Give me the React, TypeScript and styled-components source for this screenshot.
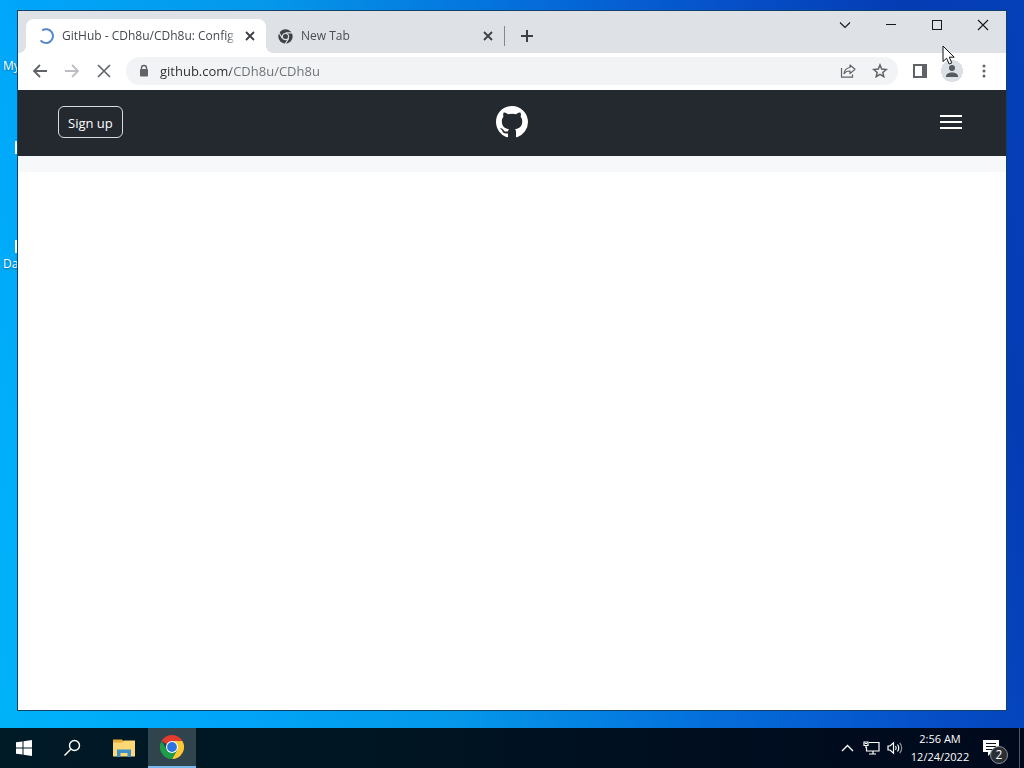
import React from "react";
import styled, { createGlobalStyle } from "styled-components";

const GlobalStyle = createGlobalStyle`
  *, *::before, *::after { box-sizing: border-box; }
  body {
    margin: 0;
    font-family: "Open Sans", "Noto Sans", sans-serif;
    font-size: 12px;
    line-height: 16px;
  }
  button, input { font: inherit; color: inherit; }
  svg { display: block; flex: none; }
`;

const Desktop = styled.div`
  position: relative;
  min-height: 100vh;
  display: flex;
  flex-direction: column;
  overflow: hidden;
  background: linear-gradient(75deg, #00b4f8 0%, #00a6fa 18%, #0498ea 38%, #0470dc 58%, #0650c8 76%, #043cb4 90%, #0540b8 100%);
`;

const DesktopLabel = styled.span<{ $top: number }>`
  position: absolute;
  left: 3px;
  top: ${(p) => p.$top}px;
  color: #fff;
  font-size: 12px;
  white-space: nowrap;
  text-shadow: 0 1px 2px rgba(0, 0, 0, 0.4);
`;

const DesktopIconEdge = styled.span<{ $top: number }>`
  position: absolute;
  left: 15px;
  top: ${(p) => p.$top}px;
  width: 12px;
  height: 13px;
  background: #f4f8fa;
`;

const Workspace = styled.div`
  flex: 1;
  display: flex;
  padding: 10px 17px 17px;
`;

const BrowserWindow = styled.main`
  position: relative;
  flex: 1;
  min-width: 0;
  display: flex;
  flex-direction: column;
  border: 1px solid #0f4266;
  background: #fff;
`;

const TabStrip = styled.div`
  display: flex;
  height: 42px;
  padding-left: 8px;
  background: #dee1e6;
`;

const Tabs = styled.div`
  display: flex;
  align-items: flex-end;
  flex: 1;
  min-width: 0;
`;

const Tab = styled.div<{ $active?: boolean }>`
  position: relative;
  display: flex;
  align-items: center;
  width: ${(p) => (p.$active ? 240 : 238)}px;
  height: 34px;
  padding: 0 8px 0 12px;
  border-radius: 8px 8px 0 0;
  color: ${(p) => (p.$active ? "#45494d" : "#4a4e52")};
  background: ${(p) => (p.$active ? "#fff" : "transparent")};

  &::before,
  &::after {
    content: "";
    display: ${(p) => (p.$active ? "block" : "none")};
    position: absolute;
    bottom: 0;
    width: 8px;
    height: 8px;
  }
  &::before {
    right: 100%;
    background: radial-gradient(circle at 0 0, transparent 8px, #fff 8px);
  }
  &::after {
    left: 100%;
    background: radial-gradient(circle at 100% 0, transparent 8px, #fff 8px);
  }
`;

const TabTitle = styled.span`
  flex: 1;
  min-width: 0;
  margin: 0 6px 0 8px;
  overflow: hidden;
  white-space: nowrap;
  mask-image: linear-gradient(to left, transparent, #000 8px);
`;

const IconButton = styled.button<{ $size?: number }>`
  display: flex;
  align-items: center;
  justify-content: center;
  flex: none;
  width: ${(p) => p.$size ?? 28}px;
  height: ${(p) => p.$size ?? 28}px;
  padding: 0;
  border: 0;
  border-radius: 50%;
  background: transparent;
  color: #5f6368;
`;

const TabClose = styled(IconButton)`
  color: #3c4043;
`;

const TabSeparator = styled.span`
  width: 1px;
  height: 20px;
  margin: 0 8px 7px 0;
  background: #85888d;
`;

const NewTabButton = styled(IconButton)`
  margin-bottom: 3px;
  color: #3c4043;
`;

const WindowControls = styled.div`
  display: flex;
  flex: none;
`;

const WindowButton = styled.button`
  display: flex;
  align-items: center;
  justify-content: center;
  width: 46px;
  height: 28px;
  padding: 0;
  border: 0;
  background: transparent;
  color: #16181a;
`;

const Toolbar = styled.div`
  display: flex;
  align-items: center;
  gap: 4px;
  height: 37px;
  padding: 0 8px 1px;
  background: #fff;
`;

const Omnibox = styled.form`
  display: flex;
  align-items: center;
  gap: 4px;
  flex: 1;
  min-width: 0;
  height: 28px;
  margin: 0 4px;
  padding: 0 4px 0 12px;
  border-radius: 14px;
  background: #f1f3f4;
`;

const Address = styled.input`
  flex: 1;
  min-width: 0;
  margin-left: 6px;
  padding: 0;
  border: 0;
  outline: 0;
  font-size: 13px;
  line-height: 20px;
  color: transparent;
  background: linear-gradient(to right, #2b2e31 71px, #6b6f74 71px);
  background-clip: text;
  -webkit-background-clip: text;
`;

const Avatar = styled(IconButton)`
  background: radial-gradient(circle, #dcdfe6 11px, transparent 11px);
`;

const SiteHeader = styled.header`
  display: grid;
  grid-template-columns: 1fr auto 1fr;
  align-items: center;
  padding: 16px 40px 18px;
  background: #24282f;
`;

const SignUp = styled.a`
  justify-self: start;
  padding: 6px 9px 4px;
  border: 1px solid #d8dade;
  border-radius: 6px;
  color: #fff;
  font-size: 13px;
  line-height: 20px;
  text-decoration: none;
`;

const MenuButton = styled(IconButton)`
  justify-self: end;
  justify-content: flex-start;
  width: 26px;
  color: #fff;
`;

const PageBanner = styled.div`
  height: 16px;
  background: #f6f8f9;
`;

const PageBody = styled.div`
  flex: 1;
  background: #fff;
`;

const Pointer = styled.svg`
  position: absolute;
  right: 51px;
  top: 34px;
`;

const Taskbar = styled.footer`
  display: flex;
  justify-content: space-between;
  height: 40px;
  color: #fff;
  background: linear-gradient(to right, #001a26, #001522 40%, #000c1f 75%, #000a1c);
`;

const TaskGroup = styled.div`
  display: flex;
  align-items: center;
`;

const PinnedApps = styled(TaskGroup)`
  padding-left: 4px;
`;

const TaskButton = styled.button<{ $active?: boolean }>`
  display: flex;
  align-items: center;
  justify-content: center;
  width: 48px;
  height: 40px;
  padding: 0;
  border: 0;
  border-bottom: ${(p) => (p.$active ? "2px solid #76b9ed" : "0")};
  background: ${(p) => (p.$active ? "#30444e" : "transparent")};
`;

const TrayButton = styled.button`
  display: flex;
  align-items: center;
  justify-content: center;
  width: 24px;
  height: 40px;
  padding: 0;
  border: 0;
  background: transparent;
`;

const Clock = styled.time`
  display: flex;
  flex-direction: column;
  align-items: center;
  width: 66px;
  font-size: 11px;
  line-height: 18px;
`;

const Notifications = styled.button`
  position: relative;
  display: flex;
  align-items: center;
  width: 46px;
  height: 40px;
  padding: 0 0 0 10px;
  border: 0;
  background: transparent;
`;

const Badge = styled.span`
  position: absolute;
  left: 17px;
  top: 18px;
  width: 18px;
  height: 18px;
  border: 1px solid #8b9096;
  border-radius: 50%;
  background: #2a2e35;
  font-size: 12px;
  line-height: 16px;
  text-align: center;
`;

const ShowDesktop = styled.span`
  width: 5px;
  height: 40px;
  border-left: 1px solid #4d5664;
`;

const Spinner = () => (
  <svg width="16" height="16" viewBox="0 0 16 16" fill="none" stroke="#5487d0" strokeWidth="2">
    <path d="M4.200 2.300A6.900 6.900 0 1 1 2.600 12.300" />
  </svg>
);

const Cross = ({ size, width = 2 }: { size: number; width?: number }) => (
  <svg width={size} height={size} viewBox={`0 0 ${size} ${size}`} stroke="currentColor" strokeWidth={width}>
    <path d={`M1 1L${size - 1} ${size - 1}M${size - 1} 1L1 ${size - 1}`} />
  </svg>
);

const ChromeMono = () => (
  <svg width="15" height="15" viewBox="0 0 24 24">
    <circle cx="12" cy="12" r="11.500" fill="#3f4348" />
    <circle cx="12" cy="12" r="5.800" fill="#dee1e6" />
    <path d="M12 6.200H23M7 15L1.500 5.500M17 15L11.500 24" stroke="#dee1e6" strokeWidth="1.800" />
    <circle cx="12" cy="12" r="4" fill="#3f4348" />
  </svg>
);

const ChromeColor = () => (
  <svg width="24" height="24" viewBox="0 0 48 48">
    <path d="M24 24L3.200 12A24 24 0 0 1 44.800 12Z" fill="#e33b2e" />
    <path d="M24 12H44.800A24 24 0 0 1 24 48L34.400 30Z" fill="#fcc934" />
    <path d="M13.600 30L3.200 12A24 24 0 0 0 24 48L34.400 30Z" fill="#1e9e4a" />
    <circle cx="24" cy="24" r="12" fill="#fff" />
    <circle cx="24" cy="24" r="9.800" fill="#2a74e0" />
  </svg>
);

const BackArrow = () => (
  <svg width="16" height="16" viewBox="0 0 16 16" fill="none" stroke="currentColor" strokeWidth="1.800">
    <path d="M15 8H2M8 2L2 8L8 14" />
  </svg>
);

const ForwardArrow = () => (
  <svg width="16" height="16" viewBox="0 0 16 16" fill="none" stroke="#bcbec1" strokeWidth="1.800">
    <path d="M1 8H14M8 2L14 8L8 14" />
  </svg>
);

const Lock = () => (
  <svg width="12" height="14" viewBox="0 0 12 14">
    <path d="M3.500 6V4a2.500 2.500 0 0 1 5 0V6" fill="none" stroke="#5f6368" strokeWidth="1.400" />
    <rect x="2" y="5" width="8" height="7.500" rx="1" fill="#5f6368" />
  </svg>
);

const Share = () => (
  <svg width="16" height="16" viewBox="0 0 16 16" fill="none" stroke="currentColor" strokeWidth="1.200" strokeLinejoin="round">
    <path d="M1.500 5V14.200H12.500V11.500" />
    <path d="M10 2L15 6.300L10 10.600V8C7.500 7.900 5.500 8.700 4 10.700C4.500 7.400 6.500 5 10 4.500Z" />
  </svg>
);

const Star = () => (
  <svg width="16" height="16" viewBox="0 0 16 16" fill="none" stroke="currentColor" strokeWidth="1.500">
    <path d="M8 2L9.700 6.100L14.200 6.500L10.800 9.400L11.800 13.700L8 11.400L4.200 13.700L5.200 9.400L1.800 6.500L6.300 6.100Z" />
  </svg>
);

const SidePanel = () => (
  <svg width="14" height="14" viewBox="0 0 14 14">
    <path fill="currentColor" fillRule="evenodd" d="M0 0H14V14H0ZM2 2V12H9V2Z" />
  </svg>
);

const Person = () => (
  <svg width="14" height="14" viewBox="0 0 14 14" fill="#555961">
    <circle cx="7" cy="4" r="3" />
    <path d="M1 12.500C1 9.800 4 8.600 7 8.600S13 9.800 13 12.500V13H1Z" />
  </svg>
);

const Dots = () => (
  <svg width="4" height="14" viewBox="0 0 4 14" fill="currentColor">
    <circle cx="2" cy="2" r="1.500" />
    <circle cx="2" cy="7" r="1.500" />
    <circle cx="2" cy="12" r="1.500" />
  </svg>
);

const GitHubMark = () => (
  <svg width="32" height="32" viewBox="0 0 16 16" fill="#fff">
    <path d="M8 0C3.58 0 0 3.58 0 8c0 3.54 2.29 6.53 5.47 7.59.4.07.55-.17.55-.38 0-.19-.01-.82-.01-1.49-2.01.37-2.53-.49-2.69-.94-.09-.23-.48-.94-.82-1.13-.28-.15-.68-.52-.01-.53.63-.01 1.08.58 1.23.82.72 1.21 1.87.87 2.33.66.07-.52.28-.87.51-1.07-1.78-.2-3.64-.89-3.64-3.95 0-.87.31-1.59.82-2.15-.08-.2-.36-1.02.08-2.12 0 0 .67-.21 2.2.82.64-.18 1.32-.27 2-.27.68 0 1.36.09 2 .27 1.53-1.04 2.2-.82 2.2-.82.44 1.1.16 1.92.08 2.12.51.56.82 1.27.82 2.15 0 3.07-1.87 3.75-3.65 3.95.29.25.54.73.54 1.48 0 1.07-.01 1.93-.01 2.2 0 .21.15.46.55.38A8.013 8.013 0 0 0 16 8c0-4.42-3.58-8-8-8z" />
  </svg>
);

export default function App() {
  return (
    <Desktop>
      <GlobalStyle />
      <DesktopLabel $top={58}>My</DesktopLabel>
      <DesktopIconEdge $top={141} />
      <DesktopIconEdge $top={240} />
      <DesktopLabel $top={256}>Da</DesktopLabel>

      <Workspace>
        <BrowserWindow>
          <TabStrip>
            <Tabs>
              <Tab $active>
                <Spinner />
                <TabTitle>GitHub - CDh8u/CDh8u: Config files</TabTitle>
                <TabClose $size={16} aria-label="Close GitHub tab">
                  <Cross size={10} width={1.8} />
                </TabClose>
              </Tab>
              <Tab>
                <ChromeMono />
                <TabTitle>New Tab</TabTitle>
                <TabClose $size={16} aria-label="Close New Tab">
                  <Cross size={10} width={1.8} />
                </TabClose>
              </Tab>
              <TabSeparator />
              <NewTabButton aria-label="New tab">
                <svg width="12" height="12" viewBox="0 0 12 12" stroke="currentColor" strokeWidth="2">
                  <path d="M6 0V12M0 6H12" />
                </svg>
              </NewTabButton>
            </Tabs>
            <WindowControls>
              <WindowButton aria-label="Search tabs">
                <svg width="12" height="8" viewBox="0 0 12 8" fill="none" stroke="currentColor" strokeWidth="1.100">
                  <path d="M1 1.500L6 6.500L11 1.500" />
                </svg>
              </WindowButton>
              <WindowButton aria-label="Minimize">
                <svg width="10" height="2" viewBox="0 0 10 2">
                  <rect width="10" height="1" fill="currentColor" />
                </svg>
              </WindowButton>
              <WindowButton aria-label="Maximize">
                <svg width="10" height="10" viewBox="0 0 10 10" fill="none" stroke="currentColor">
                  <rect x="0.500" y="0.500" width="9" height="9" />
                </svg>
              </WindowButton>
              <WindowButton aria-label="Close window">
                <Cross size={12} width={1.1} />
              </WindowButton>
            </WindowControls>
          </TabStrip>

          <Toolbar>
            <IconButton aria-label="Back"><BackArrow /></IconButton>
            <IconButton aria-label="Forward"><ForwardArrow /></IconButton>
            <IconButton aria-label="Stop loading"><Cross size={14} width={1.6} /></IconButton>
            <Omnibox onSubmit={(e) => e.preventDefault()}>
              <Lock />
              <Address aria-label="Address" defaultValue="github.com/CDh8u/CDh8u" spellCheck={false} />
              <IconButton type="button" aria-label="Share this page"><Share /></IconButton>
              <IconButton type="button" aria-label="Bookmark this page"><Star /></IconButton>
            </Omnibox>
            <IconButton aria-label="Side panel"><SidePanel /></IconButton>
            <Avatar aria-label="Profile"><Person /></Avatar>
            <IconButton aria-label="Browser menu"><Dots /></IconButton>
          </Toolbar>

          <SiteHeader>
            <SignUp href="#signup">Sign up</SignUp>
            <a href="#home" aria-label="GitHub home"><GitHubMark /></a>
            <MenuButton aria-label="Toggle navigation">
              <svg width="22" height="14" viewBox="0 0 22 14" fill="currentColor">
                <path d="M0 0H22V2H0ZM0 6H22V8H0ZM0 12H22V14H0Z" />
              </svg>
            </MenuButton>
          </SiteHeader>
          <PageBanner />
          <PageBody />

          <Pointer width="13" height="20" viewBox="0 0 13 20">
            <path d="M1 1V16.500L4.600 13.200L7.200 19L9.800 17.900L7.300 12.200H12.200Z" fill="#fff" stroke="#111" strokeWidth="1" />
          </Pointer>
        </BrowserWindow>
      </Workspace>

      <Taskbar>
        <TaskGroup>
          <TaskButton aria-label="Start">
            <svg width="16" height="16" viewBox="0 0 16 16" fill="#fff">
              <path d="M0 2.300L6.500 1.400V7.500H0ZM7.500 1.200L16 0V7.500H7.500ZM0 8.500H6.500V14.600L0 13.700ZM7.500 8.500H16V16L7.500 14.800Z" />
            </svg>
          </TaskButton>
          <TaskButton aria-label="Search">
            <svg width="18" height="18" viewBox="0 0 18 18" fill="none" stroke="#fff" strokeWidth="1.400">
              <circle cx="11.500" cy="6.500" r="5" />
              <path d="M8 10L1.500 16.500" />
            </svg>
          </TaskButton>
          <PinnedApps>
            <TaskButton aria-label="File Explorer">
              <svg width="22" height="18" viewBox="0 0 22 18">
                <path d="M0 0.500H9L11 2.500H22V17H0Z" fill="#e8ac35" />
                <path d="M0 3.500H9L11 1.500H22V17.500H0Z" fill="#fcd975" />
                <path d="M4 10.500H18V18H14.500V14H7.500V18H4Z" fill="#3f8fca" />
              </svg>
            </TaskButton>
            <TaskButton $active aria-label="Google Chrome"><ChromeColor /></TaskButton>
          </PinnedApps>
        </TaskGroup>
        <TaskGroup>
          <TrayButton aria-label="Show hidden icons">
            <svg width="13" height="8" viewBox="0 0 13 8" fill="none" stroke="#fff" strokeWidth="1.400">
              <path d="M1 7L6.500 1.500L12 7" />
            </svg>
          </TrayButton>
          <TrayButton aria-label="Network">
            <svg width="17" height="14" viewBox="0 0 17 14" fill="none" stroke="#fff" strokeWidth="1.200">
              <path d="M6 1.500H16V10H3.500V6M10 10V13M6 13H13" />
              <path d="M1 1H5V4.500H1ZM3 4.500V7M2 2.500H4" />
            </svg>
          </TrayButton>
          <TrayButton aria-label="Volume">
            <svg width="17" height="14" viewBox="0 0 17 14" fill="none" stroke="#fff" strokeWidth="1.200">
              <path d="M1 5H3L6.500 1.800V12.200L3 9H1Z" />
              <path d="M8.500 5Q10 7 8.500 9M10.500 3.500Q13 7 10.500 10.500" />
              <path d="M12.800 1.800Q16.500 7 12.800 12.200" stroke="#8c939b" />
            </svg>
          </TrayButton>
          <Clock dateTime="2022-12-24T02:56">
            <span>2:56 AM</span>
            <span>12/24/2022</span>
          </Clock>
          <Notifications aria-label="2 notifications">
            <svg width="16" height="16" viewBox="0 0 16 16">
              <path d="M0 0H16V12H9L5 16V12H0Z" fill="#fff" />
              <path d="M3 3.500H13M3 6.500H13M3 9.500H10" stroke="#0a1220" strokeWidth="1" />
            </svg>
            <Badge>2</Badge>
          </Notifications>
          <ShowDesktop />
        </TaskGroup>
      </Taskbar>
    </Desktop>
  );
}
